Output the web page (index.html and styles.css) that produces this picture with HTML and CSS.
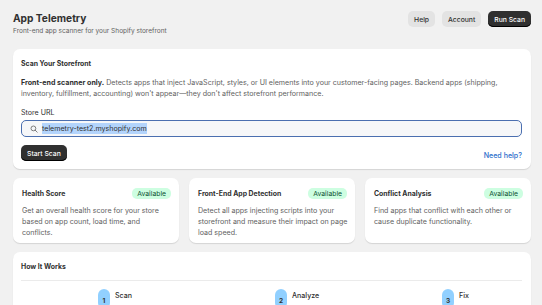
FILE: index.html
```html
<!DOCTYPE html>
<html lang="en">
<head>
    <meta charset="UTF-8">
    <meta name="viewport" content="width=device-width, initial-scale=1.0">
    <title>App Telemetry</title>
    <link rel="stylesheet" href="styles.css">
</head>
<body>
    <!-- Page header -->
    <header class="page-header">
        <div>
            <h1>App Telemetry</h1>
            <p class="subtitle">Front-end app scanner for your Shopify storefront</p>
        </div>
        <div class="actions">
            <button class="btn">Help</button>
            <button class="btn">Account</button>
            <button class="btn btn-dark">Run Scan</button>
        </div>
    </header>

    <!-- Scan card -->
    <section class="card">
        <h2>Scan Your Storefront</h2>
        <p class="desc"><strong>Front-end scanner only.</strong> Detects apps that inject JavaScript, styles, or UI elements into your customer-facing pages. Backend apps (shipping, inventory, fulfillment, accounting) won't appear—they don't affect storefront performance.</p>
        <label class="label">Store URL</label>
        <div class="field">
            <svg width="8" height="8" viewBox="0 0 20 20" fill="none" stroke="#616161" stroke-width="2">
                <circle cx="8.5" cy="8.5" r="6"/>
                <path d="M13 13l5 5" stroke-linecap="round"/>
            </svg>
            <span class="selected">telemetry-test2.myshopify.com</span>
        </div>
        <div class="card-foot">
            <button class="btn btn-dark">Start Scan</button>
            <a href="#" class="link">Need help?</a>
        </div>
    </section>

    <!-- Features -->
    <div class="features">
        <div class="card feature">
            <div class="feature-head">
                <h3>Health Score</h3>
                <span class="badge">Available</span>
            </div>
            <p>Get an overall health score for your store based on app count, load time, and conflicts.</p>
        </div>
        <div class="card feature">
            <div class="feature-head">
                <h3>Front-End App Detection</h3>
                <span class="badge">Available</span>
            </div>
            <p>Detect all apps injecting scripts into your storefront and measure their impact on page load speed.</p>
        </div>
        <div class="card feature">
            <div class="feature-head">
                <h3>Conflict Analysis</h3>
                <span class="badge">Available</span>
            </div>
            <p>Find apps that conflict with each other or cause duplicate functionality.</p>
        </div>
    </div>

    <!-- How it works -->
    <section class="card">
        <h2>How It Works</h2>
        <hr>
        <div class="steps">
            <div class="step"><span class="num">1</span><span class="step-title">Scan</span></div>
            <div class="step"><span class="num">2</span><span class="step-title">Analyze</span></div>
            <div class="step"><span class="num">3</span><span class="step-title">Fix</span></div>
        </div>
    </section>
</body>
</html>
```

FILE: styles.css
```css
body {
    font-family: Inter, "Liberation Sans", Arial, sans-serif;
    font-size: 7.1px;
    line-height: 11px;
    color: #303030;
    margin: 0;
    padding: 7px 11px 0 13px;
    background-color: #f1f1f1;
}
.page-header {
    display: flex;
    justify-content: space-between;
    align-items: flex-start;
    height: 42px;
}
h1 {
    font-size: 10.2px;
    line-height: 16px;
    font-weight: 700;
    margin: 3px 0 0;
}
.subtitle {
    margin: 0;
    font-size: 6.5px;
    color: #616161;
}
.actions {
    display: flex;
    gap: 7px;
    margin-top: 4px;
}
.btn {
    font-family: inherit;
    font-size: 6.8px;
    font-weight: 500;
    color: #303030;
    background-color: #e3e3e3;
    border: none;
    border-radius: 5px;
    height: 16px;
    padding: 0 6px;
    cursor: pointer;
}
.btn-dark {
    background-color: #303030;
    color: #ffffff;
    box-shadow: inset 0 -1px 0 #000;
}
.card {
    background-color: #ffffff;
    border-radius: 7px;
    box-shadow: 0 1px 1px rgba(0, 0, 0, 0.12);
    padding: 9px 9px 8px 8px;
    margin-bottom: 9px;
}
h2 {
    font-size: 6.9px;
    font-weight: 650;
    margin: 0;
}
.desc {
    margin: 8px 0 8px;
    padding-right: 22px;
    color: #616161;
}
.desc strong {
    color: #303030;
    font-weight: 650;
}
.label {
    display: block;
    margin-bottom: 2px;
}
.field {
    display: flex;
    align-items: center;
    gap: 4px;
    height: 15px;
    padding: 0 6px 0 8px;
    border: 1.5px solid #4b6fb0;
    border-radius: 5px;
    background-color: #f6f7f9;
    font-size: 7.1px;
}
.selected {
    background-color: #b3d4fc;
    color: #303030;
}
.card-foot {
    display: flex;
    justify-content: space-between;
    align-items: flex-end;
    margin-top: 8px;
}
.link {
    color: #2c6ecb;
    text-decoration: none;
    font-weight: 500;
}
.features {
    display: grid;
    grid-template-columns: 1fr 1fr 1fr;
    gap: 10px;
}
.feature {
    padding: 10px 8px 5px 9px;
}
.feature-head {
    display: flex;
    justify-content: space-between;
    align-items: center;
}
h3 {
    font-size: 6.9px;
    font-weight: 650;
    margin: 0;
}
.badge {
    background-color: #cdfee1;
    color: #0c5132;
    border-radius: 5px;
    padding: 0 5px;
    line-height: 11px;
    font-size: 6.8px;
}
.feature p {
    margin: 6px -1px 0 0;
    color: #616161;
}
hr {
    border: none;
    border-top: 1px solid #ebebeb;
    margin: 8px 0 8px;
}
.steps {
    display: grid;
    grid-template-columns: 177px 167px 1fr;
    padding-left: 77px;
}
.step {
    display: flex;
    gap: 5px;
}
.num {
    display: flex;
    align-items: flex-end;
    justify-content: center;
    width: 12px;
    height: 20px;
    padding-bottom: 2px;
    box-sizing: border-box;
    border-radius: 6px;
    background-color: #91d0ff;
    font-weight: 650;
    font-size: 6.5px;
}
.step-title {
    font-weight: 550;
    margin-top: 1px;
}
```
